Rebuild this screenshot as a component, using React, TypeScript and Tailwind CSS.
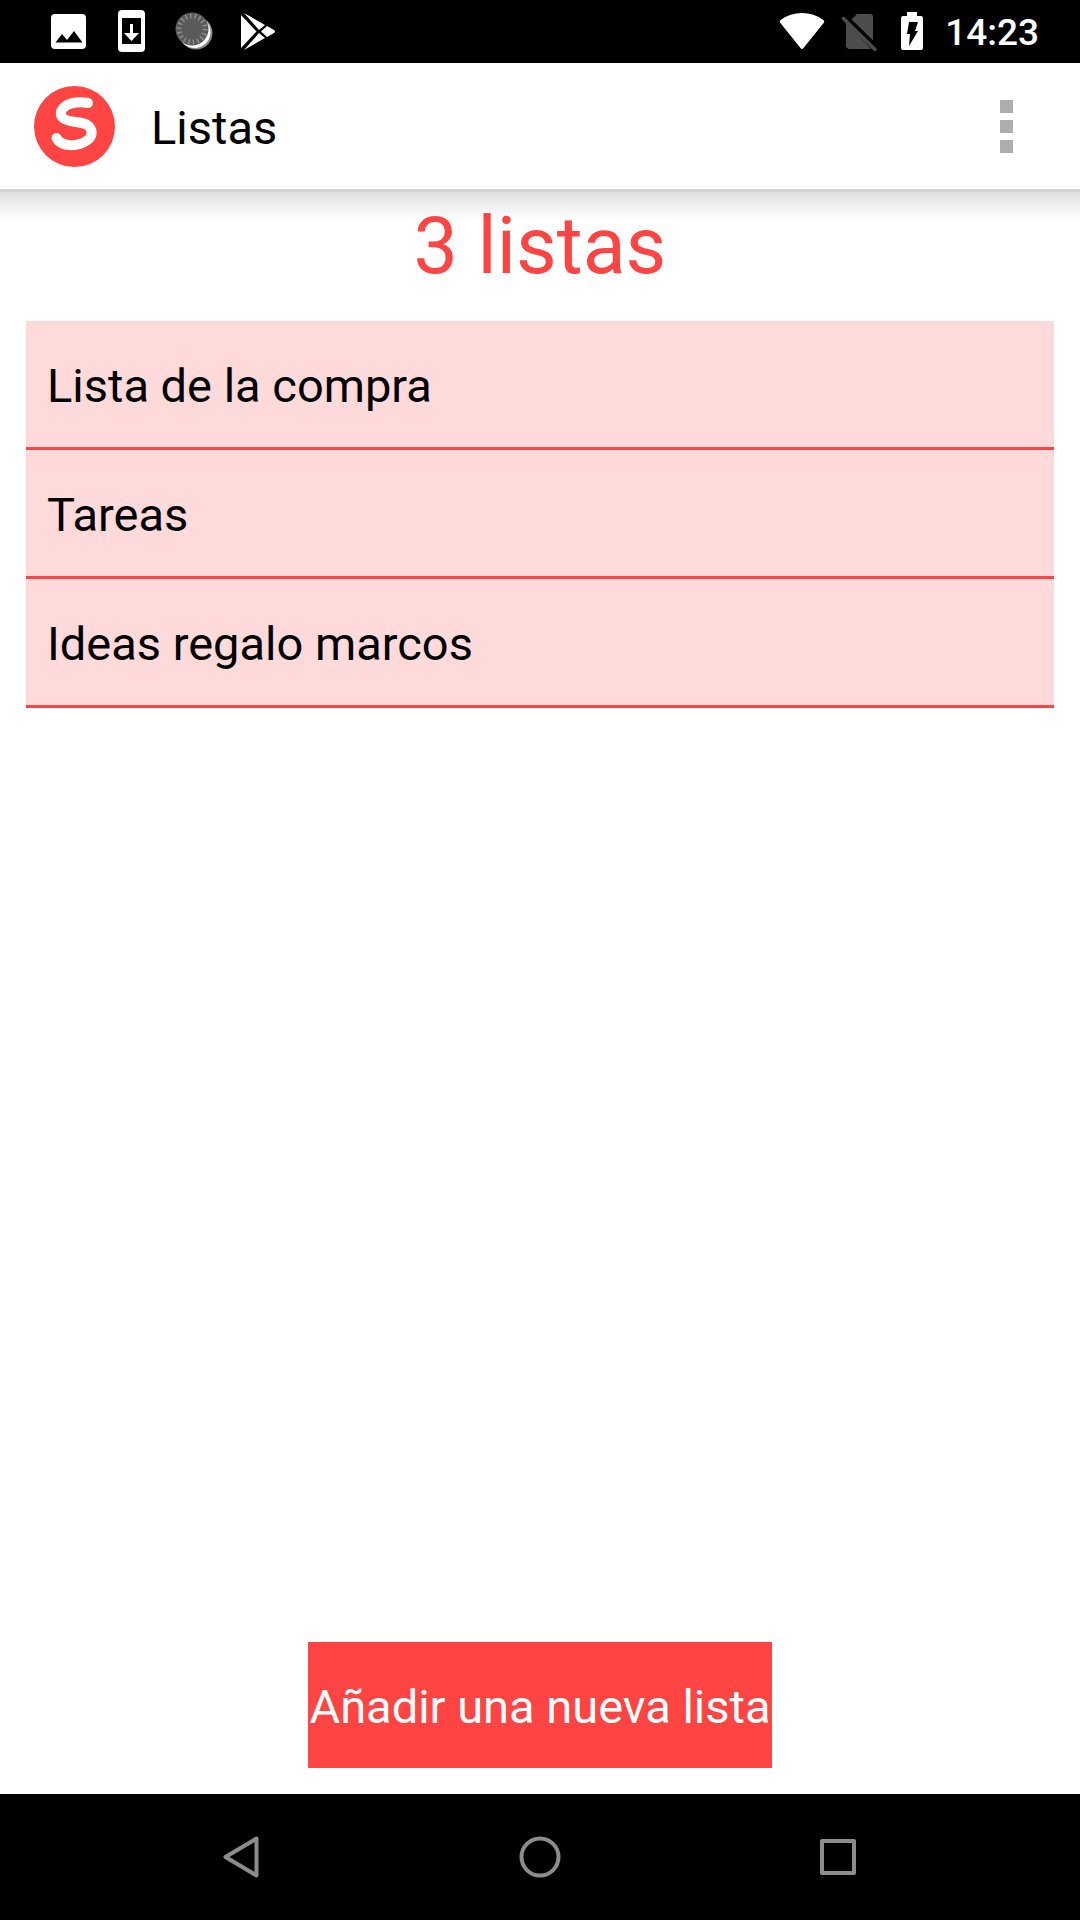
import React from "react";

const lists = ["Lista de la compra", "Tareas", "Ideas regalo marcos"];

function StatusIcons() {
  return (
    <div className="flex" aria-hidden="true">
      <svg width="63" height="63" viewBox="0 0 63 63">
        <rect x="14" y="14" width="35" height="35" rx="4" fill="#fff" />
        <path d="M18.500 42.500L25 34l5 6 7-9 8.500 11.500z" fill="#000" />
      </svg>
      <svg width="63" height="63" viewBox="0 0 63 63">
        <rect x="18" y="10" width="27" height="42" rx="4" fill="#fff" />
        <rect x="22" y="18" width="19" height="26" fill="#000" />
        <path d="M30 24h3v9h6l-7.500 8-7.500-8h6z" fill="#fff" />
      </svg>
      <svg width="63" height="63" viewBox="0 0 63 63">
        <circle cx="33" cy="33" r="16.500" fill="#8a8a8a" />
        <circle cx="31.500" cy="32" r="16" fill="#fff" />
        <circle cx="29" cy="29" r="16.500" fill="#5a5a5a" />
        <circle cx="29" cy="29" r="13" fill="none" stroke="#929292" strokeWidth="5" strokeDasharray="1.300 3.238" />
      </svg>
      <svg width="63" height="63" viewBox="0 0 63 63" fill="#fff">
        <path d="M15 15L30.500 31.500 15 48z" />
        <path d="M18 13L39 25 33 30z" />
        <path d="M18 50L39 38 33 33z" />
        <path d="M41 26L48 30Q50 31.500 48 33L41 37 35 31.500z" />
      </svg>
    </div>
  );
}

function StatusBar() {
  return (
    <div className="flex h-[63px] shrink-0 items-center justify-between bg-black pl-[37px] pr-[41px]">
      <StatusIcons />
      <div className="flex items-center gap-4">
        <svg width="46" height="63" viewBox="0 0 46 63" aria-hidden="true">
          <path d="M1 22.500Q0 21 2 19.800Q11 13 23 13T44 19.800Q46 21 45 22.500L24.500 48Q23 50 21.500 48z" fill="#fff" />
        </svg>
        <svg width="38" height="63" viewBox="0 0 38 63" aria-hidden="true">
          <path d="M16 14h13q3 0 3 3v27L10 20z" fill="#4d4d4d" />
          <path d="M5 22L30 49H9q-4 0-4-4z" fill="#4d4d4d" />
          <path d="M2.500 18.500L34 49.500" stroke="#4d4d4d" strokeWidth="3.500" strokeLinecap="round" />
          <path d="M7 18L33 43.500" stroke="#000" strokeWidth="3" />
        </svg>
        <svg width="34" height="63" viewBox="0 0 34 63" aria-hidden="true">
          <path d="M12 12h10v4h4q2 0 2 2v30q0 2-2 2H8q-2 0-2-2V18q0-2 2-2h4z" fill="#fff" />
          <path d="M14 22h9l-3 9h3L14 46l1-12h-3z" fill="#000" />
        </svg>
        <span className="pt-0.5 text-[37px] font-medium leading-none text-white">14:23</span>
      </div>
    </div>
  );
}

function AppBar() {
  return (
    <header className="relative z-10 flex h-[126px] shrink-0 items-center bg-white pl-[34px] pr-[54px]">
      <svg width="81" height="81" viewBox="0 0 81 81" role="img" aria-label="Logo">
        <circle cx="40.500" cy="40.500" r="40.500" fill="#ff4444" />
        <path
          d="M54 17C47 15.500 37 16 31.500 20C26 24 25.500 29 29 32C34 37 46 35 52.500 38.500C59 42.500 59.500 50 53 54.500C47 58.500 39 60 31.500 58.500C26.500 57.500 24 55 22.500 52"
          fill="none"
          stroke="#fff"
          strokeWidth="10"
          strokeLinecap="round"
          strokeLinejoin="round"
        />
      </svg>
      <h1 className="ml-9 pt-1 text-[47px] leading-[56px] text-black">Listas</h1>
      <button type="button" aria-label="Más opciones" className="ml-auto flex w-[40px] flex-col items-center gap-[7px]">
        <span className="size-[13px] bg-[#adadad]" />
        <span className="size-[13px] bg-[#adadad]" />
        <span className="size-[13px] bg-[#adadad]" />
      </button>
      <div className="absolute inset-x-0 top-full h-8 border-t-3 border-[#d3d3d3] bg-linear-to-b from-black/12 to-transparent" />
    </header>
  );
}

function NavBar() {
  return (
    <nav className="grid h-[126px] shrink-0 grid-cols-3 bg-black px-[92px]" aria-label="Sistema">
      <button type="button" aria-label="Atrás" className="flex items-center justify-center">
        <svg width="48" height="48" viewBox="0 0 48 48" fill="none" stroke="#8c8c8c" strokeWidth="4" strokeLinejoin="round">
          <path d="M39.500 5.500v37L8.500 24z" />
        </svg>
      </button>
      <button type="button" aria-label="Inicio" className="flex items-center justify-center">
        <svg width="48" height="48" viewBox="0 0 48 48" fill="none" stroke="#8c8c8c" strokeWidth="4">
          <circle cx="24" cy="24" r="18.500" />
        </svg>
      </button>
      <button type="button" aria-label="Recientes" className="flex items-center justify-center">
        <svg width="48" height="48" viewBox="0 0 48 48" fill="none" stroke="#8c8c8c" strokeWidth="4" strokeLinejoin="round">
          <rect x="7" y="8" width="32" height="32" />
        </svg>
      </button>
    </nav>
  );
}

export default function App() {
  return (
    <div className="flex min-h-screen flex-col bg-white font-['Roboto',sans-serif]">
      <StatusBar />
      <AppBar />
      <main className="flex grow flex-col px-[26px] pb-[26px]">
        <h2 className="flex h-[132px] items-center justify-center pb-[18px] text-[79px] leading-none text-[#ff4444]">
          3 listas
        </h2>
        <ul>
          {lists.map((name) => (
            <li key={name} className="border-b-3 border-[#ff4444] bg-[#ffdada]">
              <button type="button" className="flex h-[126px] w-full items-center px-[21px] pt-1 text-left text-[47px] leading-[56px] text-black">
                {name}
              </button>
            </li>
          ))}
        </ul>
        <button type="button" className="mt-auto h-[126px] self-center bg-[#ff4444] px-0.5 pt-1 text-[47px] leading-[56px] whitespace-nowrap text-white">
          Añadir una nueva lista
        </button>
      </main>
      <NavBar />
    </div>
  );
}
